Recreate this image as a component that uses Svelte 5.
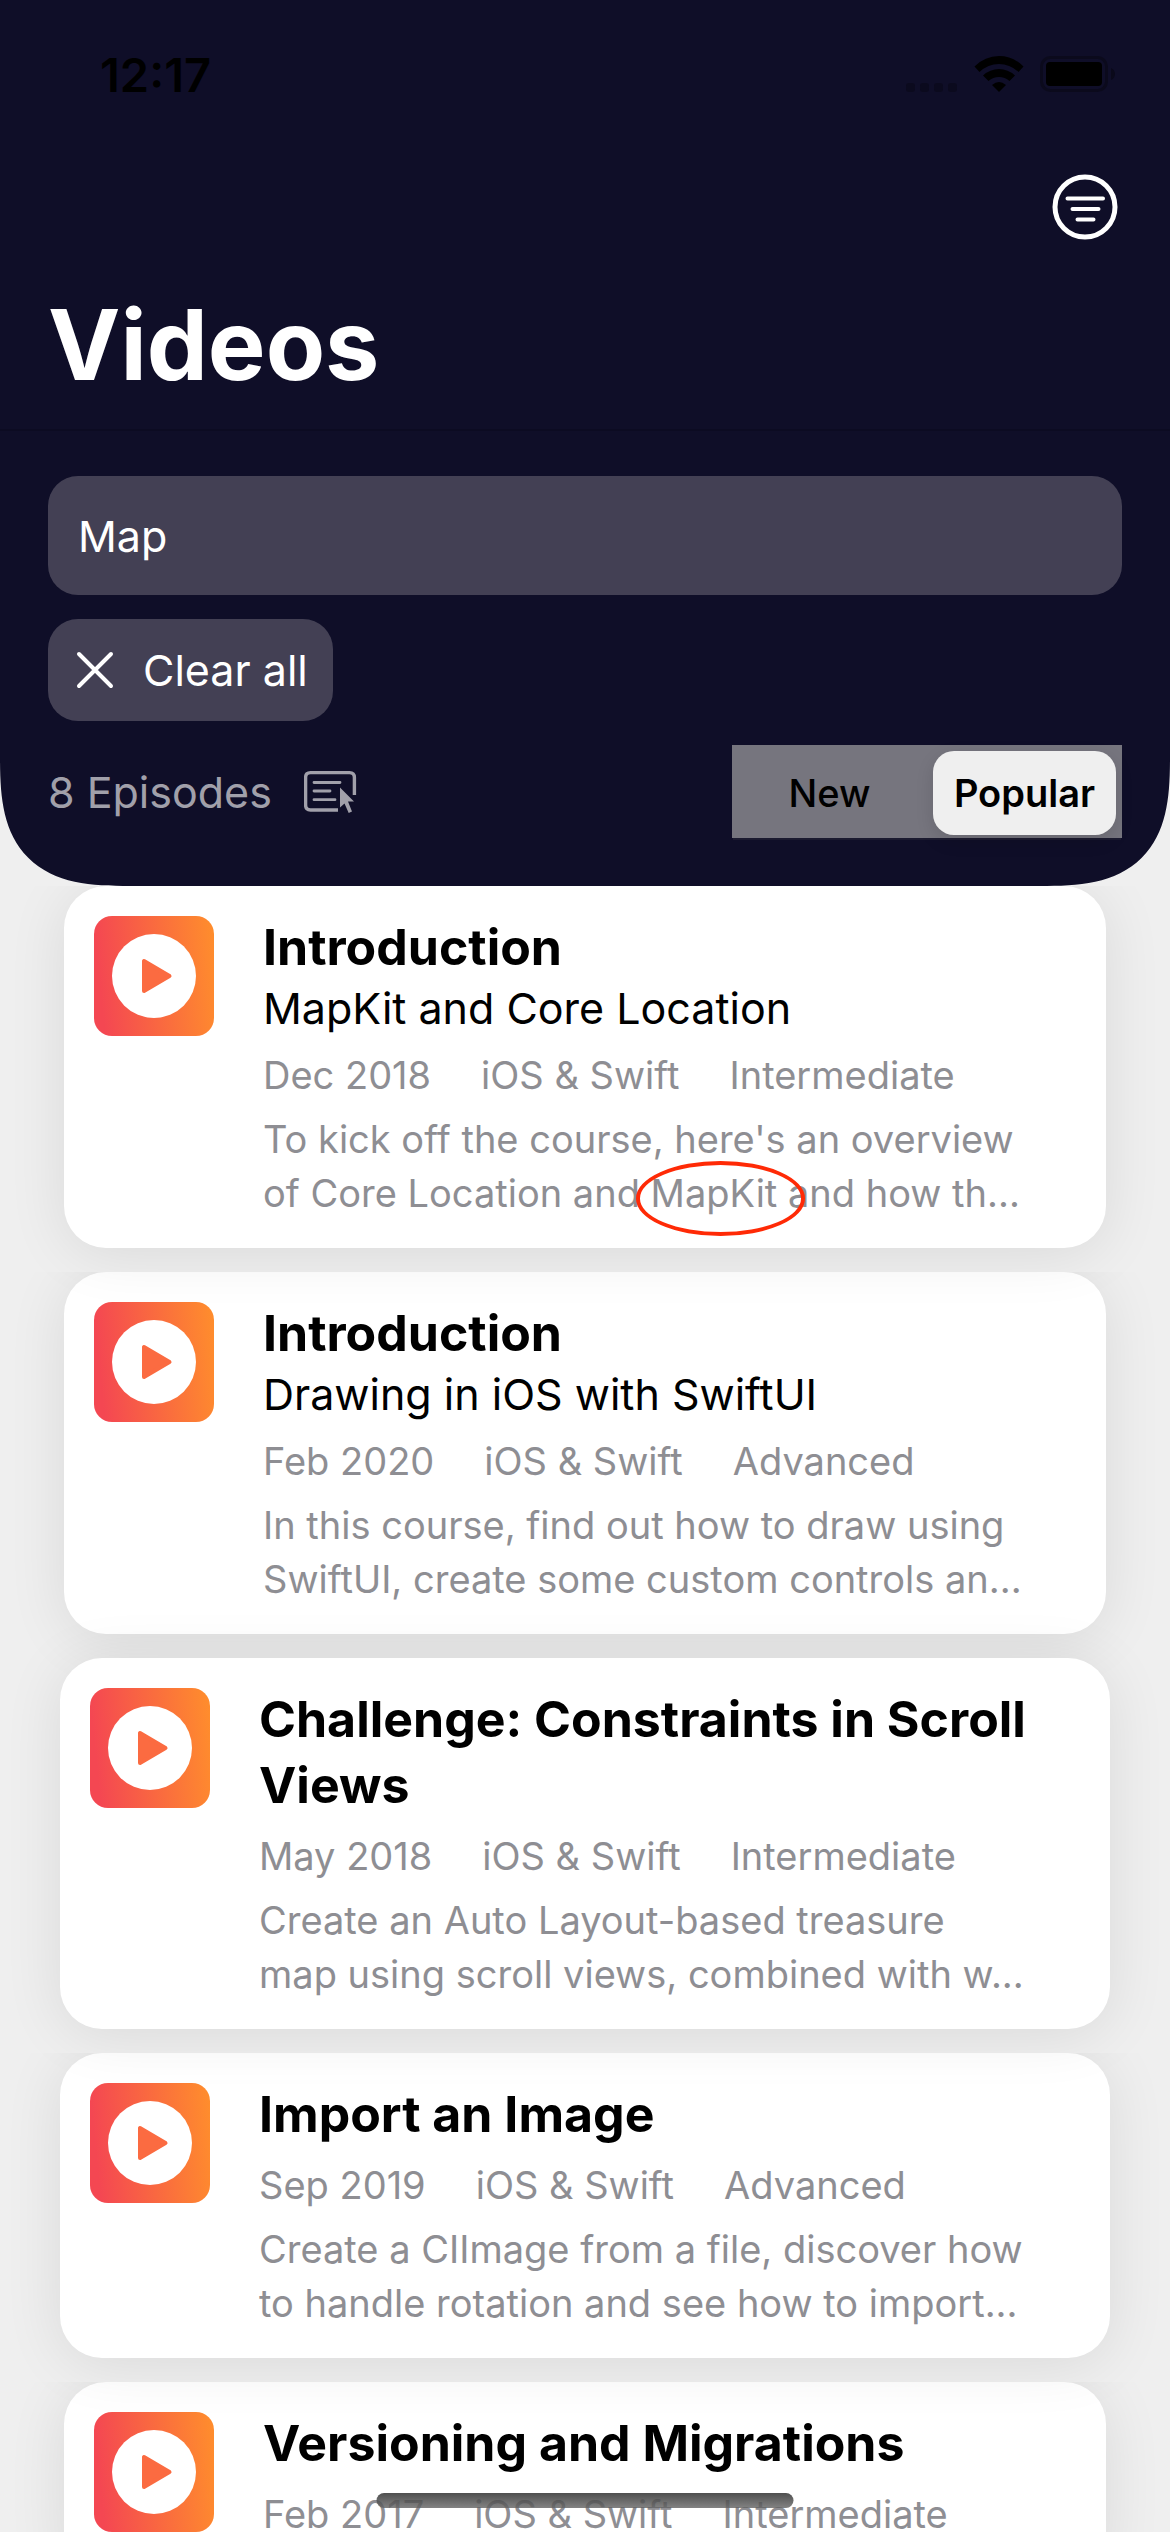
<script>
  let query = $state('Map');
  let order = $state('Popular');
  const orders = ['New', 'Popular'];

  const videos = [
    {
      title: ['Introduction'],
      course: 'MapKit and Core Location',
      meta: ['Dec 2018', 'iOS & Swift', 'Intermediate'],
      text: ["To kick off the course, here's an overview", 'of Core Location and MapKit and how th...'],
      mark: 'MapKit',
      layer: 'mid'
    },
    {
      title: ['Introduction'],
      course: 'Drawing in iOS with SwiftUI',
      meta: ['Feb 2020', 'iOS & Swift', 'Advanced'],
      text: ['In this course, find out how to draw using', 'SwiftUI, create some custom controls an...'],
      layer: 'low'
    },
    {
      title: ['Challenge: Constraints in Scroll', 'Views'],
      meta: ['May 2018', 'iOS & Swift', 'Intermediate'],
      text: ['Create an Auto Layout-based treasure', 'map using scroll views, combined with w...'],
      wide: true,
      layer: 'high'
    },
    {
      title: ['Import an Image'],
      meta: ['Sep 2019', 'iOS & Swift', 'Advanced'],
      text: ['Create a CIImage from a file, discover how', 'to handle rotation and see how to import...'],
      wide: true,
      layer: 'mid'
    },
    {
      title: ['Versioning and Migrations'],
      meta: ['Feb 2017', 'iOS & Swift', 'Intermediate'],
      text: [],
      layer: 'low'
    }
  ];
</script>

<div class="screen">
  <header>
    <div class="top">
      <div class="status">
        <span class="time">12:17</span>
        <div class="indicators">
          <svg width="52" height="38" viewBox="0 0 52 38" aria-hidden="true">
            <g fill="#0b0a1e">
              <rect x="0" y="28" width="9" height="9" rx="3" />
              <rect x="14" y="28" width="9" height="9" rx="3" />
              <rect x="28" y="28" width="9" height="9" rx="3" />
              <rect x="42" y="28" width="9" height="9" rx="3" />
            </g>
          </svg>
          <svg width="50" height="38" viewBox="0 0 50 38" aria-hidden="true">
            <path d="M0.5 11.5Q11 1 25 1T49.500 11.500L44.500 17Q36 9 25 9T5.500 17Z" />
            <path d="M9 20.500Q16 14 25 14T41 20.500L35.500 26Q31 22 25 22T14.500 26Z" />
            <path d="M18 30Q25 24 32 30L25 37Z" />
          </svg>
          <svg width="76" height="38" viewBox="0 0 76 38" aria-hidden="true">
            <rect x="1.500" y="2.500" width="65" height="33" rx="9" fill="none" stroke="#0b0a1c" stroke-width="3" />
            <rect x="6" y="7" width="56" height="24" rx="4" />
            <path d="M71 13Q75 15 75 19T71 25Z" fill="#0a091a" />
          </svg>
        </div>
      </div>
      <div class="nav">
        <button class="filter" aria-label="Filter">
          <svg width="74" height="74" viewBox="0 0 74 74" fill="none" stroke="#fff" stroke-linecap="round">
            <circle cx="37" cy="37" r="30" stroke-width="5" />
            <path d="M19.500 28.500H55M24.500 39H50.500M29.500 49.500H45.500" stroke-width="4" />
          </svg>
        </button>
      </div>
      <h1>Videos</h1>
    </div>

    <div class="tools">
      <input class="search" type="text" aria-label="Search videos" bind:value={query} />
      <button class="clear" onclick={() => (query = '')}>
        <svg width="38" height="38" viewBox="0 0 38 38" aria-hidden="true">
          <path d="M3 3L35 35M35 3L3 35" stroke="#fff" stroke-width="4" stroke-linecap="round" />
        </svg>
        Clear all
      </button>
      <div class="summary">
        <div class="count">
          <span>8 Episodes</span>
          <svg width="54" height="44" viewBox="0 0 54 44" fill="none" stroke="#a1a0aa" aria-hidden="true">
            <path d="M34 40H6.500Q1.600 40 1.600 35V7.500Q1.600 2.600 6.500 2.600H45.500Q50.400 2.600 50.400 7.500V25" stroke-width="3.400" />
            <path d="M10 12.500H36M10 21H26M10 29.700H31" stroke-width="2.800" stroke-linecap="round" />
            <path d="M36 17.500V37.500L40.500 33.500L44.700 43L48 41.500L44 31.600H50Z" fill="#a1a0aa" stroke="none" />
          </svg>
        </div>
        <div class="segments" role="group" aria-label="Sort order">
          {#each orders as name}
            <button class:active={order === name} aria-pressed={order === name} onclick={() => (order = name)}>{name}</button>
          {/each}
        </div>
      </div>
    </div>
  </header>

  <main>
    {#each videos as video}
      <article class={video.layer} class:wide={video.wide}>
        <svg class="play" width="120" height="120" viewBox="0 0 120 120" aria-hidden="true">
          <defs>
            <linearGradient id="warm" x1="0" y1="0.100" x2="1" y2="0">
              <stop offset="0" stop-color="#f44752" />
              <stop offset="1" stop-color="#ff8e2c" />
            </linearGradient>
          </defs>
          <rect width="120" height="120" rx="18" fill="url(#warm)" />
          <circle cx="60" cy="60" r="42" fill="#fff" />
          <path d="M50 45V75L75.500 60Z" fill="#fb6b41" stroke="#fb6b41" stroke-width="4" stroke-linejoin="round" />
        </svg>
        <div class="body">
          <h2>
            {#each video.title as line}<span class="line">{line}</span>{/each}
          </h2>
          {#if video.course}<p class="course">{video.course}</p>{/if}
          <ul class="meta">
            {#each video.meta as item}<li>{item}</li>{/each}
          </ul>
          <p class="text">
            {#each video.text as line}
              {#if video.mark && line.includes(video.mark)}
                {@const parts = line.split(video.mark)}
                <span class="line">{parts[0]}<span class="mark">{video.mark}</span>{parts[1]}</span>
              {:else}
                <span class="line">{line}</span>
              {/if}
            {/each}
          </p>
        </div>
      </article>
    {/each}
  </main>

  <div class="home"></div>
</div>

<style>
  :global(body) {
    margin: 0;
  }

  .screen {
    position: relative;
    display: flex;
    flex-direction: column;
    height: 100vh;
    overflow: hidden;
    background: #efefef;
    color: #000;
    font-family: Inter, 'Liberation Sans', sans-serif;
  }

  h1,
  h2,
  p,
  ul {
    margin: 0;
    padding: 0;
  }

  button,
  input {
    box-sizing: border-box;
    margin: 0;
    border: 0;
    padding: 0;
    font-family: inherit;
    cursor: pointer;
  }

  header {
    flex: none;
    background: #0f0e28;
    border-radius: 0 0 96px 96px;
  }

  @supports (corner-shape: superellipse(1.5)) {
    header {
      border-radius: 0 0 130px 130px;
      corner-shape: superellipse(1.5);
    }
  }

  .top {
    padding-bottom: 24px;
    border-bottom: 2px solid #0c0b22;
  }

  .status {
    display: flex;
    align-items: center;
    justify-content: space-between;
    height: 148px;
    padding: 0 54px 0 100px;
  }

  .time {
    font-size: 47px;
    font-weight: 600;
  }

  .indicators {
    display: flex;
    gap: 16px;
  }

  .nav {
    display: flex;
    align-items: center;
    justify-content: flex-end;
    height: 118px;
    padding: 0 48px;
  }

  .filter {
    display: flex;
    background: none;
  }

  h1 {
    padding: 19px 48px 0;
    color: #fff;
    font-size: 97px;
    font-weight: 700;
    line-height: 120px;
  }

  .tools {
    display: flex;
    flex-direction: column;
    align-items: flex-start;
    gap: 24px;
    padding: 45px 48px 48px;
  }

  .search {
    width: 100%;
    height: 119px;
    padding: 0 30px;
    border-radius: 30px;
    background: #434054;
    color: #fff;
    font-size: 43px;
    cursor: text;
  }

  .clear {
    display: flex;
    align-items: center;
    gap: 29px;
    height: 102px;
    padding: 0 25px 0 28px;
    border-radius: 30px;
    background: #434054;
    color: #fff;
    font-size: 43px;
  }

  .summary {
    display: flex;
    align-items: center;
    justify-content: space-between;
    width: 100%;
  }

  .count {
    display: flex;
    align-items: center;
    gap: 32px;
    color: #a1a0aa;
    font-size: 43px;
  }

  .segments {
    display: grid;
    grid-template-columns: 1fr 1fr;
    gap: 12px;
    width: 378px;
    padding: 6px 6px 3px;
    background: #76757e;
    box-shadow: 0 3px 0 -1px #1c1b30;
  }

  .segments button {
    height: 84px;
    border-radius: 21px;
    background: none;
    color: #000;
    font-size: 38px;
    font-weight: 500;
  }

  .segments .active {
    background: #efefef;
    box-shadow: 0 6px 18px rgba(0, 0, 0, 0.12);
    font-weight: 600;
  }

  main {
    flex: 1;
    display: flex;
    flex-direction: column;
    gap: 24px;
    overflow: hidden;
  }

  article {
    position: relative;
    flex: none;
    display: flex;
    gap: 49px;
    margin: 0 64px;
    padding: 28px 30px;
    border-radius: 42px;
    background: #fff;
    box-shadow: 0 6px 60px rgba(0, 0, 0, 0.09);
    /* Keeps a card's shadow out of the gap above it. */
    clip-path: inset(0 -64px -90px);
  }

  .wide {
    margin: 0 60px;
  }

  .low {
    z-index: 0;
  }

  .mid {
    z-index: 1;
  }

  .high {
    z-index: 2;
    clip-path: none;
  }

  .play {
    flex: none;
    margin-top: 2px;
  }

  .body {
    flex: 1;
    min-width: 0;
  }

  .line {
    display: block;
    white-space: nowrap;
  }

  h2 {
    font-size: 50px;
    font-weight: 700;
    line-height: 66px;
  }

  .course {
    font-size: 43px;
    line-height: 57px;
  }

  .meta {
    display: flex;
    gap: 50px;
    margin: 11px 0 10px;
    color: #8e8e93;
    font-size: 38px;
    line-height: 54px;
    list-style: none;
    white-space: nowrap;
  }

  .text {
    color: #8e8e93;
    font-size: 38px;
    line-height: 54px;
  }

  .mark {
    position: relative;
  }

  .mark::after {
    content: '';
    position: absolute;
    inset: -9px -28px -20px -15px;
    border: 4px solid #ff2a06;
    border-radius: 50%;
  }

  .home {
    position: absolute;
    z-index: 3;
    bottom: 24px;
    left: 50%;
    width: 417px;
    height: 15px;
    border-radius: 8px;
    background: linear-gradient(rgba(60, 60, 60, 0.9), rgba(100, 100, 100, 0.8));
    transform: translateX(-50%);
  }
</style>
